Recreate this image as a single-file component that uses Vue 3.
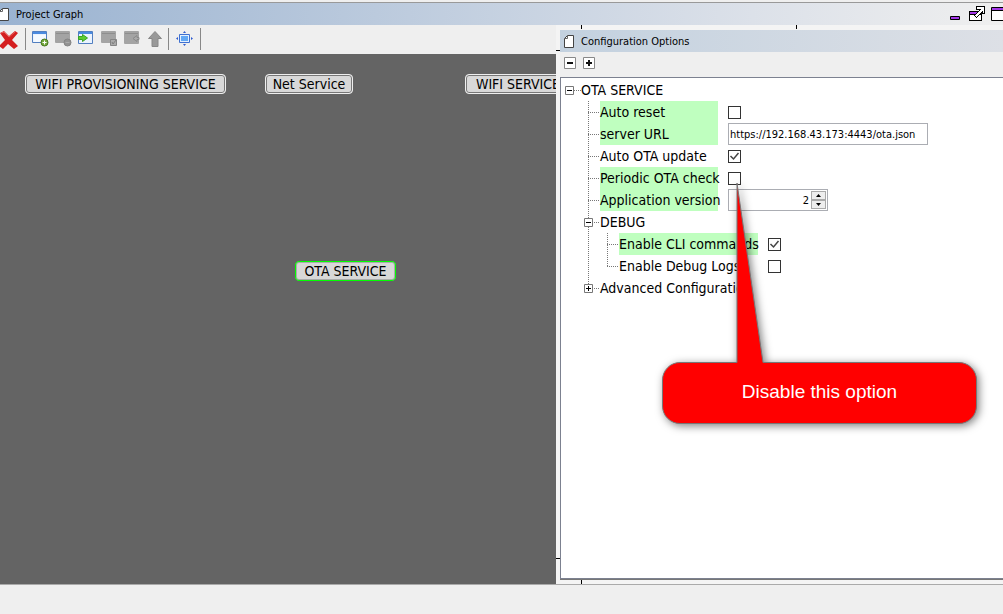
<script setup>
import { ref } from 'vue'

const nodes = [
  { name: 'WIFI PROVISIONING SERVICE', x: 25, y: 20, w: 201 },
  { name: 'Net Service', x: 265, y: 20, w: 88 },
  { name: 'WIFI SERVICE', x: 465, y: 20, w: 106 },
  { name: 'OTA SERVICE', x: 295, y: 207, w: 101, selected: true },
]

const rows = ref([
  { id: 'reset', label: 'Auto reset', type: 'check', value: false, changed: true },
  { id: 'url', label: 'server URL', type: 'text', value: 'https://192.168.43.173:4443/ota.json', changed: true },
  { id: 'update', label: 'Auto OTA update', type: 'check', value: true },
  { id: 'periodic', label: 'Periodic OTA check', type: 'check', value: false, changed: true },
  { id: 'version', label: 'Application version', type: 'number', value: 2, changed: true },
  { id: 'debug', label: 'DEBUG', type: 'group', open: true },
  { id: 'cli', label: 'Enable CLI commands', type: 'check', value: true, changed: true, nested: true },
  { id: 'logs', label: 'Enable Debug Logs', type: 'check', value: false, nested: true, end: true },
  { id: 'advanced', label: 'Advanced Configuration', type: 'group', open: false, last: true },
])
</script>

<template>
  <div class="window">
    <header class="titlebar">
      <svg class="page-icon cut" width="10" height="13" viewBox="0 0 10 13"><path d="M3.5.5h6v12h-9v-9z" fill="#fff" stroke="#444" /><path d="M3.5.5v3h-3" fill="none" stroke="#666" /></svg>
      <h1>Project Graph</h1>
      <div class="window-buttons">
        <button aria-label="Minimize"><svg width="14" height="18" viewBox="0 0 14 18"><path d="M.5 11.500h9v3h-9z" fill="#a437e8" stroke="#000" /></svg></button>
        <button aria-label="Detach"><svg width="17" height="18" viewBox="0 0 17 18" shape-rendering="crispEdges"><path d="M.5 6.500h12v9H.5z" fill="#fff" stroke="#000" /><path d="M1 7h11v2H1z" fill="#a437e8" /><path d="M1 9.500h11" stroke="#000" /><path d="M7.500 1.500h8v7h-2v-2l-6 6-2-2 6-6h-4z" fill="#fff" stroke="#000" /></svg></button>
        <button aria-label="Maximize"><svg width="12" height="18" viewBox="0 0 12 18"><path d="M.5 2.500h14v13H.5z" fill="#fff" stroke="#000" /><path d="M1 3h11v2H1z" fill="#a437e8" /><path d="M0 5.500h12" stroke="#000" /></svg></button>
      </div>
    </header>

    <main class="workspace">
      <section class="graph">
        <div class="toolbar">
          <button aria-label="Delete"><svg width="20" height="20" viewBox="0 0 20 20"><path d="M0 4l4-2 5 5 6-5 3 2-6 7 6 6-4 3-6-5-5 5-4-3 6-6z" fill="#d41f20" /><path d="M1 4l3-1 5 5 6-5" fill="none" stroke="#e5605c" /></svg></button>
          <i class="divider first"></i>
          <button aria-label="Add"><svg width="18" height="16" viewBox="0 0 18 16"><path d="M.5.5h14v11H.5z" fill="#eaf3ff" stroke="#527fc0" /><path d="M1 1h13v2H1z" fill="#4a8ae0" /><path d="M2 4h12v7H2z" fill="#f4f9ff" /><circle cx="12.500" cy="11.500" r="3.500" fill="#75a83c" stroke="#46781f" /><path d="M12.500 9.500v4M10.500 11.500h4" stroke="#fff" /></svg></button>
          <button aria-label="Remove"><svg width="18" height="16" viewBox="0 0 18 16"><rect width="15" height="12" rx="1" fill="#a4a4a4" /><path d="M1 2.500h13" stroke="#8e8e8e" /><circle cx="12.500" cy="11.500" r="3.500" fill="#929292" stroke="#858585" /><path d="M10.500 11.500h4" stroke="#aaa" /></svg></button>
          <button aria-label="Open"><svg width="18" height="16" viewBox="0 0 18 16"><path d="M.5.5h14v12H.5z" fill="#eaf3ff" stroke="#527fc0" /><path d="M1 1h13v2H1z" fill="#4a8ae0" /><path d="M.5 5.500h4v-2l5 3.500-5 3.500v-2h-4z" fill="#5ccc32" stroke="#39a422" /></svg></button>
          <button aria-label="Validate"><svg width="18" height="16" viewBox="0 0 18 16"><rect width="15" height="12" rx="1" fill="#a4a4a4" /><path d="M1 2.500h13" stroke="#8e8e8e" /><path d="M9.500 8.500h6v6h-6z" fill="#aaa" stroke="#858585" /><path d="M11 11l1 2 3-4" fill="none" stroke="#808080" /></svg></button>
          <button aria-label="Back"><svg width="18" height="16" viewBox="0 0 18 16"><rect width="15" height="13" rx="1" fill="#a4a4a4" /><path d="M1 2.500h13" stroke="#8e8e8e" /><path d="M9 7.500l4-3v2h2v2h-2v2z" fill="#aaa" stroke="#898989" /></svg></button>
          <button aria-label="Up"><svg width="16" height="16" viewBox="-1 0 16 16"><path d="M7 .5L.5 7.500h3.500v8h6v-8h3.500z" fill="#999" stroke="#888" /></svg></button>
          <i class="divider"></i>
          <button aria-label="Fit"><svg width="17" height="16" viewBox="0 0 17 16"><path d="M3.500 3.500h10v8h-10z" fill="#e3f0ff" stroke="#3f70d0" /><path d="M5 5h7v5H5z" fill="#62a8f4" /><path d="M7 2l1.500-2L10 2zM7 13l1.500 2 1.500-2zM2 6L0 7.500 2 9zM15 6l2 1.500L15 9z" fill="#2e5bd0" /></svg></button>
          <i class="divider last"></i>
        </div>
        <div class="canvas">
          <button v-for="n in nodes" :key="n.name" class="node" :class="{ selected: n.selected }" :style="{ left: n.x + 'px', top: n.y + 'px', width: n.w + 'px' }">{{ n.name }}</button>
        </div>
      </section>

      <section class="side">
        <i class="tick top-a"></i><i class="tick top-b"></i><i class="tick bottom"></i>
        <i class="tick flat upper"></i><i class="tick flat lower"></i>
        <div class="options">
          <header class="options-title">
            <svg class="page-icon" width="10" height="13" viewBox="0 0 10 13"><path d="M3.500.5h6v12h-9v-9z" fill="#fff" stroke="#444" /><path d="M3.500.5v3h-3" fill="none" stroke="#666" /></svg>
            <h2>Configuration Options</h2>
          </header>
          <div class="options-tools">
            <button aria-label="Collapse all"><svg width="12" height="12" viewBox="0 0 12 12"><path d="M.5.5h11v11H.5z" fill="#fff" stroke="#888" /><path d="M3 6h6" stroke="#111" stroke-width="2" /></svg></button>
            <button aria-label="Expand all"><svg width="12" height="12" viewBox="0 0 12 12"><path d="M.5.5h11v11H.5z" fill="#fff" stroke="#888" /><path d="M3 6h6M6 3v6" stroke="#111" stroke-width="2" /></svg></button>
          </div>
          <div class="tree">
            <div class="row root">
              <button class="expander" aria-label="Collapse OTA SERVICE"><svg width="9" height="9" viewBox="0 0 9 9"><path d="M.5.5h8v8h-8z" fill="#fff" stroke="#777" /><path d="M2 4.500h5" stroke="#000" /></svg></button>
              <i class="dots"></i>
              <span class="label">OTA SERVICE</span>
            </div>
            <div v-for="r in rows" :key="r.id" class="row child" :class="{ nested: r.nested }">
              <i v-if="r.nested" class="guide through"></i>
              <span class="guide" :class="{ end: r.end || r.last }">
                <i class="dots"></i>
                <button v-if="r.type === 'group'" class="expander over" :aria-label="'Toggle ' + r.label"><svg width="9" height="9" viewBox="0 0 9 9"><path d="M.5.5h8v8h-8z" fill="#fff" stroke="#777" /><path :d="r.open ? 'M2 4.500h5' : 'M2 4.500h5M4.500 2v5'" stroke="#000" /></svg></button>
              </span>
              <span v-if="r.type === 'group'" class="label">{{ r.label }}</span>
              <label v-else class="label" :class="{ changed: r.changed }" :for="r.id">{{ r.label }}</label>
              <span v-if="r.type === 'check'" class="check">
                <input :id="r.id" v-model="r.value" type="checkbox">
                <svg v-if="r.value" width="13" height="13" viewBox="0 0 13 13"><path d="M2.500 6l3 3 5-6" fill="none" stroke="#444" stroke-width="1.500" /></svg>
              </span>
              <input v-else-if="r.type === 'text'" :id="r.id" v-model="r.value" class="text" type="text">
              <span v-else-if="r.type === 'number'" class="spinner">
                <input :id="r.id" v-model.number="r.value" type="number">
                <span class="steps">
                  <button aria-label="Increase" @click="r.value++"><svg width="5" height="3" viewBox="0 0 5 3"><path d="M0 3l2.500-3L5 3z" /></svg></button>
                  <button aria-label="Decrease" @click="r.value--"><svg width="5" height="3" viewBox="0 0 5 3"><path d="M0 0l2.500 3L5 0z" /></svg></button>
                </span>
              </span>
            </div>
          </div>
        </div>
        <div class="callout">
          <svg width="340" height="270" viewBox="0 0 340 270"><path d="M85 11V190.500H28a17.500 17.500 0 0 0-17.500 17.500v26a17.500 17.500 0 0 0 17.500 17.500h279a17.500 17.500 0 0 0 17.500-17.500v-26a17.500 17.500 0 0 0-17.500-17.500H111z" fill="#f00" stroke="#777" /></svg>
          <p>Disable this option</p>
        </div>
      </section>
    </main>
    <footer class="status"></footer>
  </div>
</template>

<style>
body { margin: 0; background: #efefef; }
</style>

<style scoped>
* { box-sizing: border-box; }
.window { display: flex; flex-direction: column; min-height: 100vh; overflow: hidden; padding-top: 2px; background: #efefef; color: #000; font: 11px "DejaVu Sans Condensed", "DejaVu Sans", sans-serif; }
button { padding: 0; border: 0; background: none; color: inherit; font: inherit; }
svg { display: block; flex: none; }
h1, h2, p { margin: 0; font: inherit; }
.titlebar { display: flex; align-items: center; height: 23px; border-top: 1px solid #999; background: linear-gradient(to right, #9ab3d1, #dce1e9 75%, #efefef); }
.cut { margin-left: -1px; }
h1 { margin-left: 7px; }
.window-buttons { display: flex; gap: 5px; margin-left: auto; align-self: flex-start; padding-top: 2px; }
.workspace { display: grid; flex: 1; grid-template-columns: minmax(0, 556fr) minmax(0, 447fr); }
.graph { display: flex; flex-direction: column; min-width: 0; }
.toolbar { display: flex; align-items: flex-start; gap: 5px; height: 29px; padding-top: 6px; background: #efefef; }
.toolbar button:first-child { margin-top: -2px; }
.divider { width: 1px; height: 22px; margin: -3px 2px 0 0; background: #888; }
.divider.first { margin-right: 1px; }
.divider.last { margin-left: 2px; }
.canvas { position: relative; flex: 1; overflow: hidden; background: #646464; }
.node { position: absolute; height: 20px; border: 1px solid #eee; border-radius: 4px; background: #d8d8d8; box-shadow: inset 0 0 0 1px #777; font-size: 14px; line-height: 18px; white-space: nowrap; }
.node.selected { border-color: #0f0; box-shadow: inset 0 0 0 1px #aaa; }
.side { position: relative; display: flex; min-width: 0; padding: 5px 0 4px 4px; background: #f4f4f4; }
.tick { position: absolute; width: 1px; height: 4px; background: #000; }
.top-a { left: 25px; top: 0; }
.top-b { left: 240px; top: 0; }
.bottom { left: 25px; bottom: 0; }
.flat { left: 0; width: 4px; height: 1px; }
.upper { top: 25px; }
.lower { bottom: 25px; }
.options { display: flex; flex: 1; flex-direction: column; min-width: 0; border-bottom: 1px solid #777; }
.options-title { display: flex; align-items: center; gap: 7px; height: 22px; padding-left: 4px; background: linear-gradient(to right, #c3d1df, #dde0e6); }
.options-tools { display: flex; align-items: center; gap: 7px; height: 25px; padding: 0 0 3px 4px; background: #efefef; }
.tree { flex: 1; padding-top: 1px; border: 1px solid #7c8190; border-right: 0; background: #fff; font-size: 14px; }
.row { display: flex; align-items: center; height: 22px; }
.root { padding-left: 4px; }
.child { padding-left: 27px; }
.expander { width: 9px; height: 9px; }
.dots { width: 7px; height: 1px; background: repeating-linear-gradient(to right, #777 0 1px, transparent 1px 2px); }
.guide { position: relative; display: flex; align-items: center; width: 12px; height: 22px; background: repeating-linear-gradient(to bottom, #777 0 1px, transparent 1px 2px) left top / 1px 100% no-repeat; }
.guide .dots { width: 11px; }
.guide.end { background-size: 1px 50%; }
.guide.through { width: 19px; }
.over { position: absolute; left: -4px; top: 7px; }
.label { line-height: 22px; white-space: nowrap; }
label.label { width: 118px; margin-right: 10px; }
.nested label.label { width: 139px; }
.changed { background: #bfffbf; }
.check { position: relative; width: 13px; height: 13px; }
.check input { display: block; width: 13px; height: 13px; margin: 0; border: 1px solid #333; background: #fff; appearance: none; }
.check svg { position: absolute; inset: 0; pointer-events: none; }
.text { width: 200px; height: 22px; padding: 0 1px; border: 1px solid #abadb3; background: #fff; font: 11px "DejaVu Sans Condensed", sans-serif; }
.spinner { display: flex; align-items: center; width: 100px; height: 22px; padding-right: 1px; border: 1px solid #abadb3; background: #fff; }
.spinner input { flex: 1; min-width: 0; height: 20px; padding: 0 2px; border: 0; background: none; text-align: right; font: 11px "DejaVu Sans Condensed", sans-serif; appearance: textfield; }
.spinner input::-webkit-inner-spin-button { display: none; }
.steps { display: flex; flex-direction: column; width: 15px; }
.steps button { display: flex; align-items: center; justify-content: center; height: 9px; border: 1px solid #aaa; background: #eee; }
.callout { position: absolute; left: 96px; top: 147px; width: 340px; pointer-events: none; }
.callout svg { filter: drop-shadow(2px 2px 4px rgba(0, 0, 0, .5)); }
.callout p { position: absolute; left: 10px; right: 15px; top: 208px; color: #fff; font: 19px/24px "Liberation Sans", Arial, sans-serif; text-align: center; }
.status { height: 30px; border-top: 1px solid #aaa; background: #efefef; }
</style>
